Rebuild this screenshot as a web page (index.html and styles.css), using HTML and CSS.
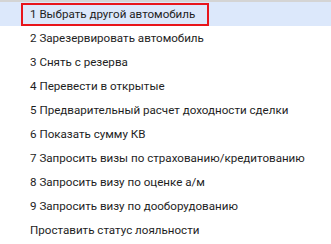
FILE: index.html
```html
<!DOCTYPE html>
<html lang="ru">
<head>
  <meta charset="UTF-8">
  <title>Меню</title>
  <link rel="stylesheet" href="styles.css">
</head>
<body>
  <ul class="menu">
    <li class="item active"><span class="mark">1 Выбрать другой автомобиль</span></li>
    <li class="item"><span class="mark">2 Зарезервировать автомобиль</span></li>
    <li class="item"><span class="mark">3 Снять с резерва</span></li>
    <li class="item"><span class="mark">4 Перевести в открытые</span></li>
    <li class="item"><span class="mark">5 Предварительный расчет доходности сделки</span></li>
    <li class="item"><span class="mark">6 Показать сумму КВ</span></li>
    <li class="item"><span class="mark">7 Запросить визы по страхованию/кредитованию</span></li>
    <li class="item"><span class="mark">8 Запросить визу по оценке а/м</span></li>
    <li class="item"><span class="mark">9 Запросить визу по дооборудованию</span></li>
    <li class="item"><span class="mark">Проставить статус лояльности</span></li>
  </ul>
</body>
</html>
```

FILE: styles.css
```css
body {
  margin: 0;
  background: #fff;
  font-family: Roboto, "Noto Sans", sans-serif;
  font-size: 11.6px;
  color: #1e1e1e;
}

.menu {
  list-style: none;
  margin: 0;
  padding: 0;
  border-top: 2px solid #d4d4d4;
}

.item {
  height: 24px;
  display: flex;
  align-items: center;
  padding-left: 21px;
  white-space: nowrap;
}

.item.active {
  background: #dce8fb;
}

.mark {
  border: 2px solid transparent;
  padding: 2px 12px 2px 7px;
  line-height: 15px;
}

.item.active .mark {
  border-color: #e8151b;
}
```
